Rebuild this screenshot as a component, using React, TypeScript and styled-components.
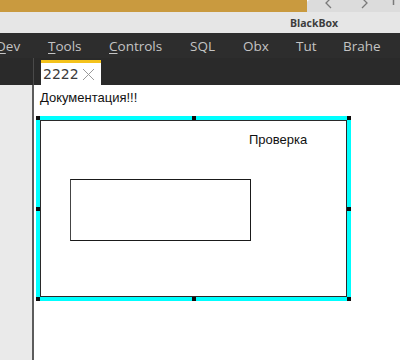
import * as React from 'react';
import styled, { createGlobalStyle } from 'styled-components';

const Global = createGlobalStyle`
	html, body { margin: 0; padding: 0; background: #ffffff; }
	#root { width: 400px; height: 360px; overflow: hidden; }
`;

const Screen = styled.div`
	width: 400px;
	height: 360px;
	display: flex;
	flex-direction: column;
	overflow: hidden;
	font-family: "Liberation Sans", Arial, sans-serif;
`;

const TopStrip = styled.div`
	height: 12px;
	display: flex;
	flex-shrink: 0;
`;

const Accent = styled.div`
	width: 307px;
	background: #c99a3f;
`;

const NavArea = styled.div`
	flex: 1;
	background: #dcdcdc;
	border-top-left-radius: 3px;
	svg { display: block; }
`;

const TitleBar = styled.div`
	height: 21px;
	flex-shrink: 0;
	background: #e6e6e6;
	display: flex;
	align-items: center;
	padding-left: 290px;
	font-family: "Open Sans", "DejaVu Sans", sans-serif;
	font-weight: 700;
	font-size: 10.5px;
	color: #3d3d3d;
`;

const MenuBar = styled.div`
	height: 25px;
	flex-shrink: 0;
	background: #2d2d2d;
	display: flex;
	align-items: center;
	font-family: "Open Sans", "DejaVu Sans", sans-serif;
	font-size: 13.5px;
	color: #c4c4c4;
	white-space: nowrap;
`;

const MenuItem = styled.span<{ $w: number; $shift?: number }>`
	flex: 0 0 ${p => p.$w}px;
	margin-left: ${p => p.$shift || 0}px;
	u { text-decoration: underline; text-underline-offset: 2px; }
`;

const TabStrip = styled.div`
	height: 27px;
	flex-shrink: 0;
	background: #2a2a2a;
	display: flex;
	align-items: flex-end;
`;

const StripGap = styled.div`
	width: 33px;
	align-self: stretch;
	border-right: 1px solid #4a4a4a;
`;

const Tab = styled.div`
	width: 58px;
	height: 22px;
	margin-left: 7px;
	background: #ffffff;
	border-top: 3px solid #f4c21b;
	display: flex;
	align-items: center;
	padding-left: 2px;
	box-sizing: content-box;
	font-family: "DejaVu Sans", sans-serif;
	font-size: 14px;
	color: #3a3a3a;
	gap: 3px;
`;

const Workspace = styled.div`
	flex: 1;
	display: flex;
`;

const Sidebar = styled.div`
	width: 32px;
	background: #eaeaea;
	border-right: 2px solid #5c5c5c;
`;

const Document = styled.div`
	flex: 1;
	background: #ffffff;
	padding: 6px 0 0 2px;
	display: flex;
	flex-direction: column;
	align-items: flex-start;
`;

const Heading = styled.div`
	font-size: 13px;
	line-height: 14px;
	color: #111;
	margin-left: 4px;
`;

const Frame = styled.div`
	position: relative;
	margin-top: 11px;
	width: 315px;
	height: 185px;
	box-sizing: border-box;
	border: 4px solid #00ffff;
`;

const Inner = styled.div`
	height: 100%;
	box-sizing: border-box;
	border: 1px solid #2a2a2a;
	display: flex;
	flex-direction: column;
	align-items: flex-start;
`;

const Label = styled.div`
	margin: 12px 0 0 208px;
	font-size: 13px;
	line-height: 14px;
	color: #111;
`;

const Field = styled.div`
	margin: 32px 0 0 29px;
	width: 181px;
	height: 62px;
	box-sizing: border-box;
	border: 1px solid #1a1a1a;
	border-left-color: #444;
	background: #fff;
`;

const Handle = styled.span<{ $x: 'l' | 'c' | 'r'; $y: 't' | 'm' | 'b' }>`
	position: absolute;
	width: 4px;
	height: 4px;
	background: #0d0d0d;
	${p => (p.$x === 'l' ? 'left: -4px;' : p.$x === 'r' ? 'right: -4px;' : 'left: calc(50% - 2px);')}
	${p => (p.$y === 't' ? 'top: -4px;' : p.$y === 'b' ? 'bottom: -4px;' : 'top: calc(50% - 2px);')}
`;

const menu: { label: string; key: number; w: number }[] = [
	{ label: 'Dev', key: 0, w: 52 },
	{ label: 'Tools', key: 0, w: 61 },
	{ label: 'Controls', key: 0, w: 81 },
	{ label: 'SQL', key: -1, w: 53 },
	{ label: 'Obx', key: -1, w: 53 },
	{ label: 'Tut', key: -1, w: 47 },
	{ label: 'Brahe', key: -1, w: 60 },
];

const handles: ['l' | 'c' | 'r', 't' | 'm' | 'b'][] = [
	['l', 't'], ['c', 't'], ['r', 't'],
	['l', 'm'], ['r', 'm'],
	['l', 'b'], ['c', 'b'], ['r', 'b'],
];

export default function App() {
	return (
		<Screen>
			<Global />
			<TopStrip>
				<Accent />
				<NavArea>
					<svg width="93" height="12" viewBox="0 0 93 12">
						<polyline points="24,-2 19,3 24,8" fill="none" stroke="#7a7a7a" strokeWidth="1.3" />
						<polyline points="55,-2 60,3 55,8" fill="none" stroke="#7a7a7a" strokeWidth="1.3" />
						<line x1="86.5" y1="0" x2="86.5" y2="5" stroke="#7a7a7a" strokeWidth="1.5" />
					</svg>
				</NavArea>
			</TopStrip>
			<TitleBar>BlackBox</TitleBar>
			<MenuBar>
				{menu.map((m, i) => (
					<MenuItem key={m.label} $w={m.w} $shift={i === 0 ? -4 : 0}>
						{m.key === 0 ? (
							<>
								<u>{m.label[0]}</u>
								{m.label.slice(1)}
							</>
						) : (
							m.label
						)}
					</MenuItem>
				))}
			</MenuBar>
			<TabStrip>
				<StripGap />
				<Tab>
					2222
					<svg width="13" height="13" viewBox="0 0 13 13">
						<path d="M1 1 L12 12 M12 1 L1 12" stroke="#9a9a9a" strokeWidth="1" />
					</svg>
				</Tab>
			</TabStrip>
			<Workspace>
				<Sidebar />
				<Document>
					<Heading>Документация!!!</Heading>
					<Frame>
						<Inner>
							<Label>Проверка</Label>
							<Field />
						</Inner>
						{handles.map(([x, y]) => (
							<Handle key={x + y} $x={x} $y={y} />
						))}
					</Frame>
				</Document>
			</Workspace>
		</Screen>
	);
}
